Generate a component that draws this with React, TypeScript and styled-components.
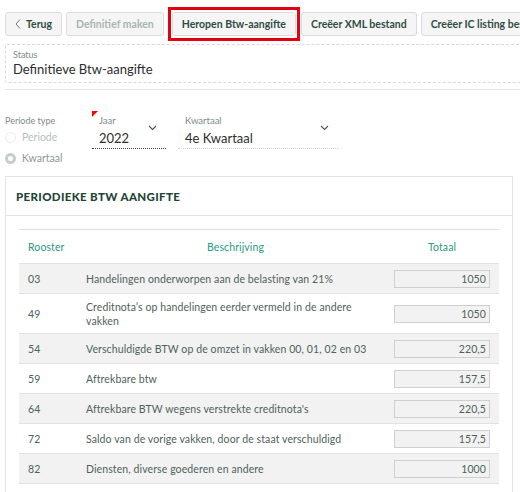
import * as React from 'react';
import styled, { createGlobalStyle } from 'styled-components';

const GlobalStyle = createGlobalStyle`
  html, body {
    margin: 0;
    padding: 0;
    background: #fff;
    font-family: Lato, "Noto Sans", sans-serif;
    color: #3d5a4f;
    overflow: hidden;
  }
`;

const Page = styled.div`
  width: 535px;
  padding: 12px 0 0 5px;
  box-sizing: border-box;
`;

const Toolbar = styled.div`
  display: flex;
  gap: 4px;
  white-space: nowrap;
`;

const Button = styled.button<{ $disabled?: boolean }>`
  flex: none;
  height: 24px;
  padding: 0 9px;
  border: 1px solid #dcdcdc;
  border-radius: 3px;
  background: #f5f5f5;
  font-family: inherit;
  font-size: 10.5px;
  font-weight: 700;
  color: ${p => (p.$disabled ? '#a9b6b0' : '#2f4d43')};
  display: flex;
  align-items: center;
  gap: 5px;
`;

const Highlight = styled.span`
  flex: none;
  display: flex;
  border: 3px solid #e4000f;
  padding: 2px 1px;
  margin: -5px -3px -5px 0;
`;

const StatusBox = styled.div`
  margin-top: 8px;
  border: 1px dashed #d8d8d8;
  border-radius: 2px;
  padding: 4px 7px 6px;
  height: 39px;
  box-sizing: border-box;
`;

const SmallLabel = styled.div`
  font-size: 9px;
  color: #7d8b86;
`;

const StatusValue = styled.div`
  font-size: 13px;
  color: #2d2d2d;
  margin-top: 1px;
`;

const Divider = styled.div`
  height: 1px;
  background: #e6e6e6;
  margin-top: 6px;
`;

const FilterRow = styled.div`
  display: flex;
  align-items: flex-start;
  margin-top: 25px;
`;

const RadioGroup = styled.div`
  width: 87px;
  display: flex;
  flex-direction: column;
`;

const RadioItem = styled.div<{ $checked?: boolean }>`
  display: flex;
  align-items: center;
  gap: 6px;
  font-size: 10.5px;
  color: ${p => (p.$checked ? '#8a9a94' : '#b6c1bd')};
  margin-top: ${p => (p.$checked ? '9px' : '5px')};
`;

const RadioCircle = styled.span<{ $checked?: boolean }>`
  width: 11px;
  height: 11px;
  border-radius: 50%;
  box-sizing: border-box;
  border: ${p => (p.$checked ? '3.5px solid #c5cecb' : '1px solid #eceeed')};
  background: #fff;
`;

const Select = styled.div<{ $width: number; $invalid?: boolean }>`
  position: relative;
  width: ${p => p.$width}px;
  margin-right: 12px;
  border-bottom: 1px dotted ${p => (p.$invalid ? '#444' : '#cfcfcf')};
  height: 34px;
  box-sizing: border-box;
`;

const Corner = styled.span`
  position: absolute;
  left: 0;
  top: -4px;
  width: 0;
  height: 0;
  border-top: 6px solid #ff0000;
  border-right: 6px solid transparent;
`;

const SelectLabel = styled.div`
  font-size: 9.5px;
  color: #7d8b86;
  padding-left: 7px;
`;

const SelectValue = styled.div`
  display: flex;
  justify-content: space-between;
  align-items: center;
  padding-left: 7px;
  font-size: 13px;
  color: #2d2d2d;
  margin-top: 4px;
`;

const Chevron = styled.svg`
  margin-top: -20px;
  margin-right: 9px;
`;

const Card = styled.div`
  margin-top: 12px;
  width: 508px;
  border: 1px solid #e3e3e3;
  border-bottom: none;
  box-sizing: border-box;
  height: 330px;
`;

const CardHeader = styled.div`
  height: 38px;
  border-bottom: 1px solid #e6e6e6;
  display: flex;
  align-items: center;
  padding-left: 10px;
  font-size: 11.5px;
  font-weight: 900;
  letter-spacing: 0.35px;
  color: #1f4536;
`;

const Table = styled.table`
  margin: 13px 0 0 13px;
  width: 480px;
  border-collapse: collapse;
  font-size: 10.5px;
  letter-spacing: 0.1px;
`;

const HeadCell = styled.th<{ $align: string; $padLeft?: number }>`
  height: 33px;
  border-top: 1px solid #dedede;
  text-align: ${p => p.$align};
  font-weight: 400;
  font-size: 10.5px;
  color: #2a9a82;
  padding: 0 9px 0 ${p => p.$padLeft ?? 9}px;
`;

const Row = styled.tr<{ $shade: boolean }>`
  background: ${p => (p.$shade ? '#f2f2f2' : '#fff')};
  border-top: 1px solid #e2e2e2;
  &:last-child {
    border-bottom: 1px solid #e2e2e2;
  }
`;

const Cell = styled.td<{ $tall?: boolean }>`
  height: ${p => (p.$tall ? '39px' : '29px')};
  padding: 0 9px;
  color: #4e625b;
  line-height: 14px;
  vertical-align: middle;
`;

const CodeCell = styled(Cell)`
  width: 40px;
`;

const AmountCell = styled(Cell)`
  width: 96px;
  padding: 0 9px 0 0;
`;

const AmountBox = styled.div`
  width: 96px;
  height: 18px;
  box-sizing: border-box;
  border: 1px solid #cfcfcf;
  background: #f2f2f2;
  text-align: right;
  padding-right: 3px;
  line-height: 16px;
  font-size: 10.5px;
  color: #4e625b;
`;

const rows = [
  { code: '03', text: 'Handelingen onderworpen aan de belasting van 21%', amount: '1050' },
  { code: '49', text: "Creditnota\u2019s op handelingen eerder vermeld in de andere vakken", amount: '1050', tall: true },
  { code: '54', text: 'Verschuldigde BTW op de omzet in vakken 00, 01, 02 en 03', amount: '220,5' },
  { code: '59', text: 'Aftrekbare btw', amount: '157,5' },
  { code: '64', text: "Aftrekbare BTW wegens verstrekte creditnota's", amount: '220,5' },
  { code: '72', text: 'Saldo van de vorige vakken, door de staat verschuldigd', amount: '157,5' },
  { code: '82', text: 'Diensten, diverse goederen en andere', amount: '1000' },
];

const ChevronIcon = () => (
  <Chevron width="9" height="6" viewBox="0 0 9 6">
    <path d="M1 1l3.5 3.5L8 1" fill="none" stroke="#555" strokeWidth="1.1" />
  </Chevron>
);

export default function App() {
  return (
    <Page>
      <GlobalStyle />
      <Toolbar>
        <Button>
          <svg width="6" height="10" viewBox="0 0 6 10">
            <path d="M5 0.5L1 5l4 4.5" fill="none" stroke="#666" strokeWidth="0.9" />
          </svg>
          Terug
        </Button>
        <Button $disabled>Definitief maken</Button>
        <Highlight>
          <Button>Heropen Btw-aangifte</Button>
        </Highlight>
        <Button>Creëer XML bestand</Button>
        <Button>Creëer IC listing bestand</Button>
      </Toolbar>

      <StatusBox>
        <SmallLabel>Status</SmallLabel>
        <StatusValue>Definitieve Btw-aangifte</StatusValue>
      </StatusBox>
      <Divider />

      <FilterRow>
        <RadioGroup>
          <SmallLabel>Periode type</SmallLabel>
          <RadioItem>
            <RadioCircle />
            Periode
          </RadioItem>
          <RadioItem $checked>
            <RadioCircle $checked />
            Kwartaal
          </RadioItem>
        </RadioGroup>
        <Select $width={74} $invalid>
          <Corner />
          <SelectLabel>Jaar</SelectLabel>
          <SelectValue>
            2022
            <ChevronIcon />
          </SelectValue>
        </Select>
        <Select $width={160}>
          <SelectLabel>Kwartaal</SelectLabel>
          <SelectValue>
            4e Kwartaal
            <ChevronIcon />
          </SelectValue>
        </Select>
      </FilterRow>

      <Card>
        <CardHeader>PERIODIEKE BTW AANGIFTE</CardHeader>
        <Table>
          <thead>
            <tr>
              <HeadCell $align="left">Rooster</HeadCell>
              <HeadCell $align="center">Beschrijving</HeadCell>
              <HeadCell $align="center" $padLeft={0}>Totaal</HeadCell>
            </tr>
          </thead>
          <tbody>
            {rows.map((r, i) => (
              <Row key={r.code} $shade={i % 2 === 0}>
                <CodeCell $tall={r.tall}>{r.code}</CodeCell>
                <Cell $tall={r.tall}>{r.text}</Cell>
                <AmountCell $tall={r.tall}>
                  <AmountBox>{r.amount}</AmountBox>
                </AmountCell>
              </Row>
            ))}
          </tbody>
        </Table>
      </Card>
    </Page>
  );
}
